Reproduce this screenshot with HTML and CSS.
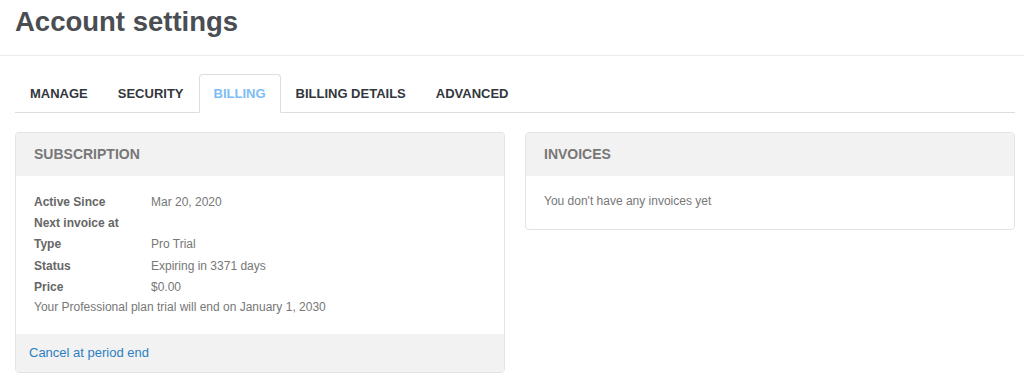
FILE: index.html
```html
<!DOCTYPE html>
<html lang="en">
<head>
    <meta charset="UTF-8">
    <title>Account settings</title>
    <link rel="stylesheet" href="styles.css">
</head>
<body>
    <div class="page-header">
        <h1>Account settings</h1>
    </div>
    <div class="content">
        <ul class="tabs">
            <li>Manage</li>
            <li>Security</li>
            <li class="active">Billing</li>
            <li>Billing Details</li>
            <li>Advanced</li>
        </ul>
        <div class="cards">
            <div class="card">
                <div class="card-head">Subscription</div>
                <div class="card-body">
                    <table class="info">
                        <tr><th>Active Since</th><td>Mar 20, 2020</td></tr>
                        <tr><th>Next invoice at</th><td></td></tr>
                        <tr><th>Type</th><td>Pro Trial</td></tr>
                        <tr><th>Status</th><td>Expiring in 3371 days</td></tr>
                        <tr><th>Price</th><td>$0.00</td></tr>
                    </table>
                    <p class="note">Your Professional plan trial will end on January 1, 2030</p>
                </div>
                <div class="card-foot"><a href="#">Cancel at period end</a></div>
            </div>
            <div class="card">
                <div class="card-head">Invoices</div>
                <div class="card-body short">
                    <p class="note">You don't have any invoices yet</p>
                </div>
            </div>
        </div>
    </div>
</body>
</html>
```
FILE: styles.css
```css
* {
    margin: 0;
    padding: 0;
    box-sizing: border-box;
}
body {
    font-family: "Liberation Sans", Arial, sans-serif;
    color: #666;
    background: #fff;
}
.page-header {
    height: 56px;
    border-bottom: 1px solid #ebebeb;
    padding: 5px 15px 0;
}
.page-header h1 {
    font-size: 27.5px;
    line-height: 34px;
    color: #4a4d52;
    font-weight: bold;
}
.content {
    padding: 18px 9px 0 15px;
}
.tabs {
    list-style: none;
    display: flex;
    border-bottom: 1px solid #ddd;
    height: 39px;
}
.tabs li {
    padding: 0 14px;
    line-height: 38px;
    font-size: 13px;
    font-weight: bold;
    text-transform: uppercase;
    color: #33373d;
    border: 1px solid transparent;
    border-radius: 4px 4px 0 0;
}
.tabs li.active {
    color: #7ebdf4;
    border-color: #ddd;
    border-bottom-color: #fff;
    background: #fff;
    height: 39px;
}
.cards {
    display: flex;
    gap: 20px;
    align-items: flex-start;
    margin-top: 19px;
}
.card {
    flex: 1;
    border: 1px solid #e3e3e3;
    border-radius: 4px;
    overflow: hidden;
}
.card-head {
    background: #f2f2f2;
    height: 43px;
    line-height: 43px;
    padding: 0 18px;
    font-size: 14px;
    font-weight: bold;
    text-transform: uppercase;
    color: #777;
}
.card-body {
    padding: 15px 18px 15px;
    font-size: 12px;
}
.card-body.short {
    padding-bottom: 17px;
}
.info {
    border-collapse: collapse;
}
.info th {
    text-align: left;
    font-weight: bold;
    width: 117px;
    height: 21.3px;
    color: #666;
    padding: 0;
}
.info td {
    color: #777;
    padding: 0;
}
.note {
    line-height: 21.3px;
    color: #777;
}
.card-foot {
    background: #f2f2f2;
    padding: 0 13px;
    height: 38px;
    line-height: 38px;
    font-size: 13px;
}
.card-foot a {
    color: #2d7fc1;
    text-decoration: none;
}
```
